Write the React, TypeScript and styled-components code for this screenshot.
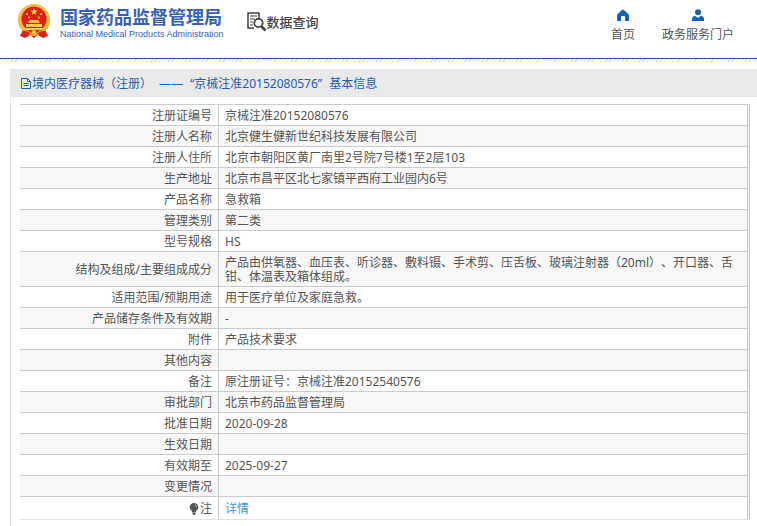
import React from 'react';
import styled, { createGlobalStyle } from 'styled-components';

const GlobalStyle = createGlobalStyle`
  * { box-sizing: border-box; }
  body {
    margin: 0;
    background: #fff;
    color: #555;
    font: 12px/14px "Noto Sans", "Noto Sans CJK SC", sans-serif;
    text-spacing-trim: space-all;
  }
  a { color: inherit; text-decoration: none; }
`;

const Page = styled.div`
  display: flex;
  flex-direction: column;
  min-height: 100vh;
`;

const Header = styled.header`
  display: flex;
  align-items: flex-start;
  height: 59px;
  padding: 3px 23px 0 17px;
  border-bottom: 1px solid #1f5a9c;
`;

const Hatch = styled.div`
  height: 3px;
  background: repeating-linear-gradient(135deg, #d3e2f3 0 1px, #fff 1px 3px);
`;

const Brand = styled.a`
  display: flex;
  gap: 9px;
`;

const BrandText = styled.div`
  padding-top: 4px;
  color: #3762b0;
`;

const BrandName = styled.h1`
  margin: 0;
  font-size: 18px;
  line-height: 20px;
  font-weight: 700;
  white-space: nowrap;
`;

const BrandEnglish = styled.div`
  font: 400 9px/14px "Liberation Sans", sans-serif;
  white-space: nowrap;
`;

const Query = styled.a`
  display: flex;
  align-items: center;
  margin: 8px 0 0 22px;
  color: #444;
  font-size: 13px;
  line-height: 20px;
  font-weight: 500;
`;

const Nav = styled.nav`
  display: flex;
  gap: 27px;
  margin-left: auto;
  padding-top: 5px;
`;

const NavLink = styled.a`
  display: flex;
  flex-direction: column;
  align-items: center;
  gap: 6px;
  color: #555;
`;

const Panel = styled.main`
  flex: 1;
  margin: 7px 0 0 10px;
  border-left: 1px solid #e4e4e4;
`;

const PanelTitle = styled.h2`
  display: flex;
  align-items: center;
  gap: 7px;
  height: 28px;
  margin: 0 0 7px -1px;
  padding: 2px 11px 0;
  background: #e9e9e9;
  color: #1c5fb8;
  font-size: 12px;
  font-weight: 400;
  white-space: nowrap;
`;

const TitleLead = styled.span`
  display: flex;
  align-items: center;
`;

const TableFrame = styled.div`
  margin: 0 7px 0 9px;
  padding-right: 1px;
  border-right: 1px solid #c8cacc;
  border-bottom: 1px solid #e2e2e2;
  background: #f1f1f1;
`;

const Table = styled.table`
  width: 100%;
  table-layout: fixed;
  border-spacing: 0;
  border-right: 1px solid #c8cacc;
  background: #fff;
`;

const LabelColumn = styled.col`
  width: 199px;
`;

const Row = styled.tr<{ $tall?: boolean }>`
  line-height: ${(p) => (p.$tall ? 16 : 14)}px;
  &:nth-child(even) { background: #f7f7f7; }
`;

const Label = styled.th`
  padding: 4px 6px 2px 0;
  border-top: 1px solid #c9cbcd;
  border-right: 1px solid #c9cbcd;
  font-weight: 400;
  text-align: right;
`;

const Value = styled.td`
  padding: 4px 6px 2px;
  border-top: 1px solid #c9cbcd;
`;

const LabelWithIcon = styled.span`
  display: flex;
  align-items: center;
  justify-content: flex-end;
  gap: 1px;
`;

const DetailLink = styled.a`
  display: block;
  color: #3f96e4;
`;

const Emblem = () => (
  <svg width="34" height="36" viewBox="0 0 34 36" aria-hidden="true">
    <path d="M7 25 3 33l5 2 5-3 4 3 4-3 5 3 5-2-4-8z" fill="#d9211c" />
    <circle cx="17" cy="17" r="16" fill="#edb83b" />
    <circle cx="17" cy="17" r="14" fill="none" stroke="#f8cf58" strokeWidth="1" strokeDasharray="2 1" />
    <circle cx="17" cy="16" r="12.5" fill="#df2019" />
    <path d="m17 5 1 2.400 2.600.1-2 1.700.7 2.500-2.300-1.400-2.300 1.400.7-2.500-2-1.700 2.600-.1z" fill="#ffd650" />
    <g fill="#fbc94b">
      <circle cx="10" cy="11" r="1.100" />
      <circle cx="24" cy="11" r="1.100" />
      <circle cx="12" cy="14.500" r="1" />
      <circle cx="22" cy="14.500" r="1" />
      <path d="m11 20 2-3h8l2 3zM9 21h16v3H9zM6 25h22v2H6z" />
    </g>
    <path d="M5 27q7-1 12 3 5-4 12-3l-1 6-4 1-3-3-4 1-4-1-3 3-4-1z" fill="#df2019" />
    <circle cx="17" cy="29.500" r="2.500" fill="#f2bd3d" />
    <path d="M5 27q6 0 10 4M29 27q-6 0-10 4" fill="none" stroke="#f2bd3d" strokeWidth="1" />
  </svg>
);

const SearchDocIcon = () => (
  <svg width="21" height="21" viewBox="0 0 21 21" fill="none" stroke="#3f4349" aria-hidden="true">
    <path d="M13 7V2H2v15h6" strokeWidth="1.500" />
    <path d="M4 5h7M4 8h5M4 11h3M4 14h3" />
    <circle cx="12.500" cy="12" r="4.200" strokeWidth="1.800" />
    <path d="m15.500 15.500 4 4" strokeWidth="2.600" />
  </svg>
);

const HomeIcon = () => (
  <svg width="14" height="14" viewBox="0 0 14 14" fill="#1262b8" aria-hidden="true">
    <path d="M7 1.500Q7.500 1.500 8 2l4.500 4.200q.5.500.5 1.200V12q0 1-1 1H9V9q0-1-1-1H6Q5 8 5 9v4H2q-1 0-1-1V7.400q0-.7.5-1.200L6 2q.5-.5 1-.500z" />
  </svg>
);

const UserIcon = () => (
  <svg width="14" height="14" viewBox="0 0 14 14" fill="#1262b8" aria-hidden="true">
    <circle cx="7" cy="4.200" r="3" />
    <path d="M1 13v-2q0-2.500 3-3.200L7 10l3-2.200q3 .7 3 3.200v2z" />
  </svg>
);

const FileIcon = () => (
  <svg width="11" height="12" viewBox="0 0 11 12" fill="none" stroke="#1c5fb8" aria-hidden="true">
    <path d="M.5.500h6l3 3v7h-9zM6.500.500v3h3M2.500 5.500h5M2.500 7.500h5" />
  </svg>
);

const BulbIcon = () => (
  <svg width="10" height="12" viewBox="0 0 10 12" fill="#555" aria-hidden="true">
    <path d="M5 0a4.300 4.300 0 0 1 4.300 4.300Q9.300 6.500 7 8v1.500H3V8Q.7 6.500.7 4.300A4.300 4.300 0 0 1 5 0zM3.500 10h3v1l-1 1h-1l-1-1z" />
    <path d="M6 2q1.300.3 1.600 1.700" fill="none" stroke="#fff" strokeWidth=".8" />
  </svg>
);

const records: [string, string][] = [
  ['注册证编号', '京械注准20152080576'],
  ['注册人名称', '北京健生健新世纪科技发展有限公司'],
  ['注册人住所', '北京市朝阳区黄厂南里2号院7号楼1至2层103'],
  ['生产地址', '北京市昌平区北七家镇平西府工业园内6号'],
  ['产品名称', '急救箱'],
  ['管理类别', '第二类'],
  ['型号规格', 'HS'],
  ['结构及组成/主要组成成分', '产品由供氧器、血压表、听诊器、敷料镊、手术剪、压舌板、玻璃注射器（20ml）、开口器、舌钳、体温表及箱体组成。'],
  ['适用范围/预期用途', '用于医疗单位及家庭急救。'],
  ['产品储存条件及有效期', '-'],
  ['附件', '产品技术要求'],
  ['其他内容', ''],
  ['备注', '原注册证号：京械注准20152540576'],
  ['审批部门', '北京市药品监督管理局'],
  ['批准日期', '2020-09-28'],
  ['生效日期', ''],
  ['有效期至', '2025-09-27'],
  ['变更情况', ''],
];

export default function App() {
  return (
    <Page lang="zh-CN">
      <GlobalStyle />
      <Header>
        <Brand href="#">
          <Emblem />
          <BrandText>
            <BrandName>国家药品监督管理局</BrandName>
            <BrandEnglish>National Medical Products Administration</BrandEnglish>
          </BrandText>
        </Brand>
        <Query href="#query"><SearchDocIcon />数据查询</Query>
        <Nav>
          <NavLink href="#home"><HomeIcon />首页</NavLink>
          <NavLink href="#portal"><UserIcon />政务服务门户</NavLink>
        </Nav>
      </Header>
      <Hatch />
      <Panel>
        <PanelTitle>
          <TitleLead><FileIcon />境内医疗器械（注册）</TitleLead>
          <span>——</span>
          <span>“京械注准20152080576”</span>
          <span>基本信息</span>
        </PanelTitle>
        <TableFrame>
          <Table>
            <colgroup><LabelColumn /><col /></colgroup>
            <tbody>
              {records.map(([label, value]) => (
                <Row key={label}>
                  <Label scope="row">{label}</Label>
                  <Value>{value}</Value>
                </Row>
              ))}
              <Row $tall>
                <Label scope="row"><LabelWithIcon><BulbIcon />注</LabelWithIcon></Label>
                <Value><DetailLink href="#detail">详情</DetailLink></Value>
              </Row>
            </tbody>
          </Table>
        </TableFrame>
      </Panel>
    </Page>
  );
}
